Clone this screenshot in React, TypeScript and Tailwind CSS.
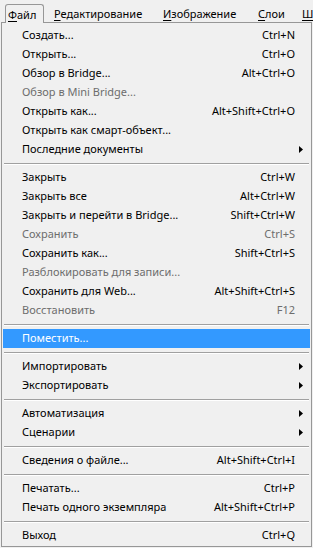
import React from 'react';

type Item =
  | { kind: 'sep' }
  | { kind: 'item'; label: string; shortcut?: string; disabled?: boolean; submenu?: boolean; active?: boolean };

const items: Item[] = [
  { kind: 'item', label: 'Создать...', shortcut: 'Ctrl+N' },
  { kind: 'item', label: 'Открыть...', shortcut: 'Ctrl+O' },
  { kind: 'item', label: 'Обзор в Bridge...', shortcut: 'Alt+Ctrl+O' },
  { kind: 'item', label: 'Обзор в Mini Bridge...', disabled: true },
  { kind: 'item', label: 'Открыть как...', shortcut: 'Alt+Shift+Ctrl+O' },
  { kind: 'item', label: 'Открыть как смарт-объект...' },
  { kind: 'item', label: 'Последние документы', submenu: true },
  { kind: 'sep' },
  { kind: 'item', label: 'Закрыть', shortcut: 'Ctrl+W' },
  { kind: 'item', label: 'Закрыть все', shortcut: 'Alt+Ctrl+W' },
  { kind: 'item', label: 'Закрыть и перейти в Bridge...', shortcut: 'Shift+Ctrl+W' },
  { kind: 'item', label: 'Сохранить', shortcut: 'Ctrl+S', disabled: true },
  { kind: 'item', label: 'Сохранить как...', shortcut: 'Shift+Ctrl+S' },
  { kind: 'item', label: 'Разблокировать для записи...', disabled: true },
  { kind: 'item', label: 'Сохранить для Web...', shortcut: 'Alt+Shift+Ctrl+S' },
  { kind: 'item', label: 'Восстановить', shortcut: 'F12', disabled: true },
  { kind: 'sep' },
  { kind: 'item', label: 'Поместить...', active: true },
  { kind: 'sep' },
  { kind: 'item', label: 'Импортировать', submenu: true },
  { kind: 'item', label: 'Экспортировать', submenu: true },
  { kind: 'sep' },
  { kind: 'item', label: 'Автоматизация', submenu: true },
  { kind: 'item', label: 'Сценарии', submenu: true },
  { kind: 'sep' },
  { kind: 'item', label: 'Сведения о файле...', shortcut: 'Alt+Shift+Ctrl+I' },
  { kind: 'sep' },
  { kind: 'item', label: 'Печатать...', shortcut: 'Ctrl+P' },
  { kind: 'item', label: 'Печать одного экземпляра', shortcut: 'Alt+Shift+Ctrl+P' },
  { kind: 'sep' },
  { kind: 'item', label: 'Выход', shortcut: 'Ctrl+Q' },
];

// small black triangle for submenu rows
const Arrow = () => (
  <svg width="4" height="7" viewBox="0 0 4 7" className="block">
    <path d="M0 0 L4 3.5 L0 7 Z" fill="#000" />
  </svg>
);

const MenuBarItem: React.FC<{ first: string; rest: string; className?: string }> = ({ first, rest, className }) => (
  <div className={className}>
    <u className="underline underline-offset-[2px]">{first}</u>
    {rest}
  </div>
);

export default function App() {
  return (
    <div
      className="w-[313px] h-[548px] bg-[#f0f0f0] overflow-hidden text-[11px] text-black"
      style={{ fontFamily: '"Noto Sans", "Open Sans", sans-serif' }}
    >
      {/* menu bar */}
      <div className="h-[22px] flex items-end">
        <div className="relative z-10 ml-[5px] w-[39px] h-[19px] border border-b-0 border-[#979797] rounded-t-[3px] bg-[#f0f0f0] mb-[-1px] pl-[2px] pt-[2px]">
          <MenuBarItem first="Ф" rest="айл" />
        </div>
        <div className="flex h-[19px] pt-[3px]">
          <MenuBarItem first="Р" rest="едактирование" className="ml-[10px] w-[109px]" />
          <MenuBarItem first="И" rest="зображение" className="w-[95px]" />
          <MenuBarItem first="С" rest="лои" className="w-[44px]" />
          <MenuBarItem first="Ш" rest="" className="w-[10px]" />
        </div>
      </div>

      {/* dropdown panel */}
      <div className="ml-[1px] w-[311px] h-[525px] border border-[#979797] bg-[#f0f0f0] pt-[3px] px-[1px]">
        {items.map((it, i) =>
          it.kind === 'sep' ? (
            <div key={i} className="h-[9px] flex flex-col justify-center px-[1px]">
              <div className="h-px bg-[#a0a0a0]" />
              <div className="h-px bg-white" />
            </div>
          ) : (
            <div
              key={i}
              className={
                'h-[19px] flex items-center pl-[19px] pr-[15px] whitespace-nowrap ' +
                (it.active ? 'bg-[#3399ff] text-white' : it.disabled ? 'text-[#6d6d6d]' : 'text-black')
              }
            >
              <span className="flex-1">{it.label}</span>
              {it.shortcut && <span>{it.shortcut}</span>}
              {it.submenu && (
                <span className="mr-[-8px]">
                  <Arrow />
                </span>
              )}
            </div>
          )
        )}
      </div>
    </div>
  );
}
